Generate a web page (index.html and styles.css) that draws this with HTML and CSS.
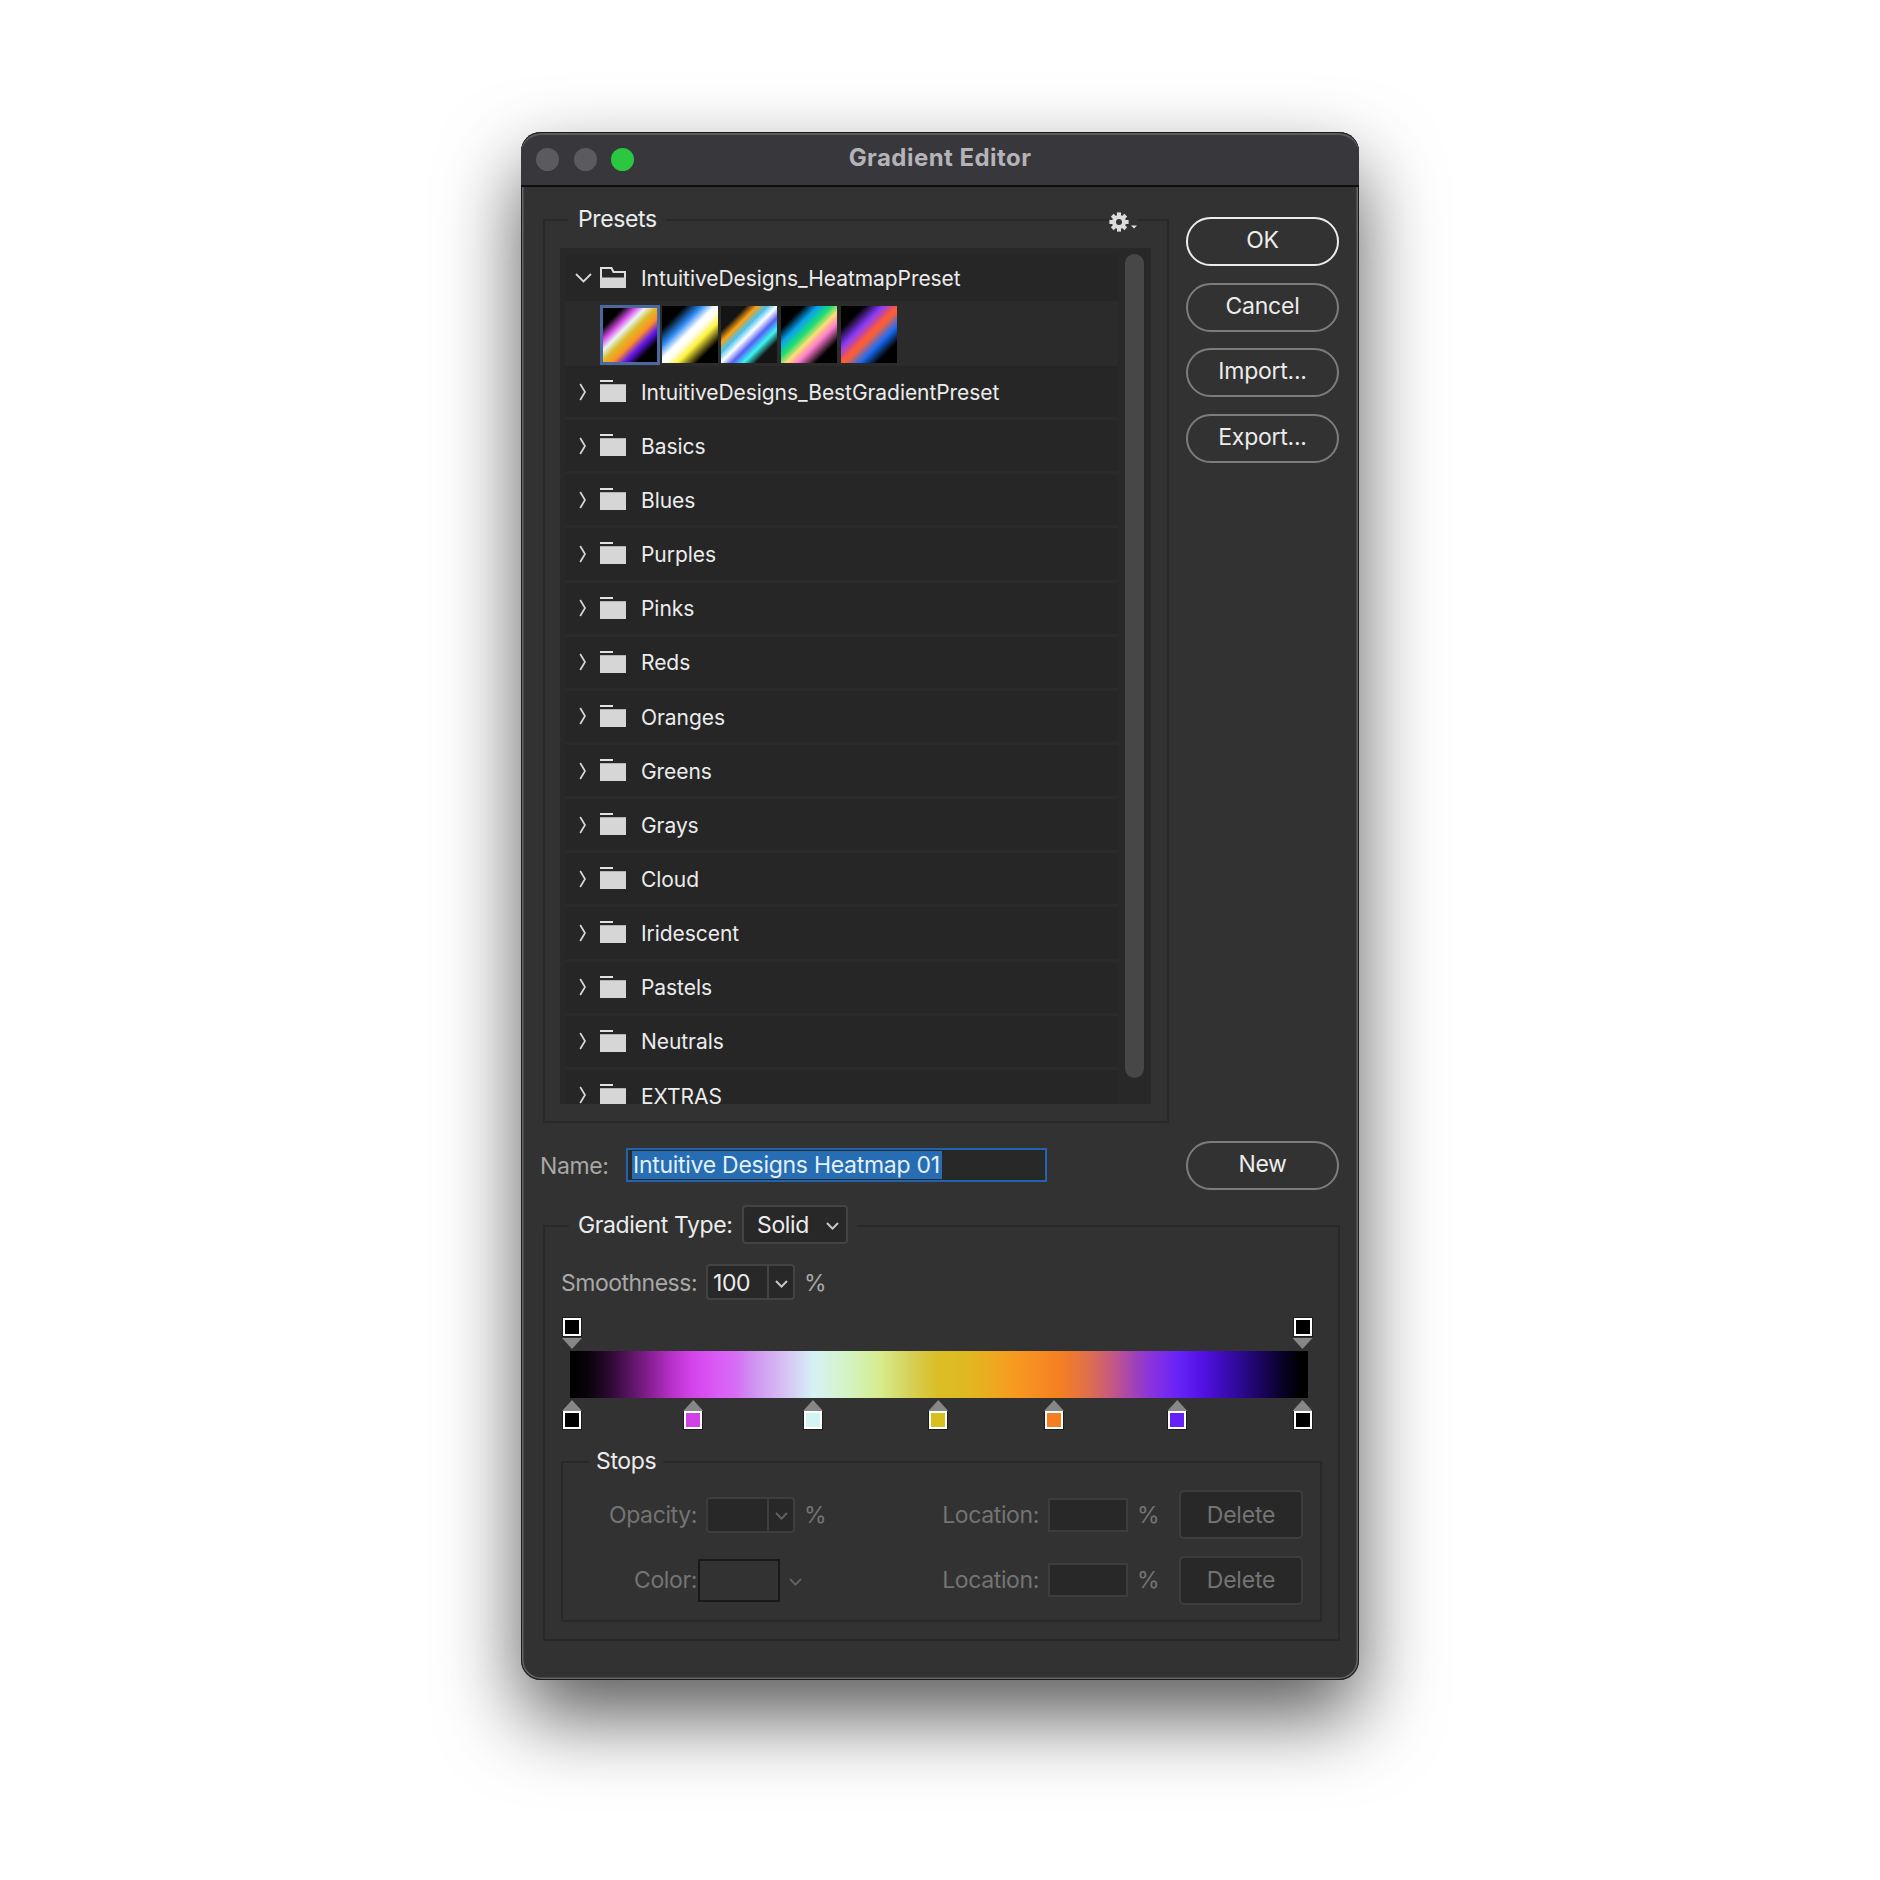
FILE: index.html
```html
<!DOCTYPE html>
<html lang="en">
<head>
<meta charset="utf-8">
<title>Gradient Editor</title>
<link rel="stylesheet" href="styles.css">
</head>
<body>
<svg width="0" height="0" class="defs">
  <symbol id="folder" viewBox="0 0 26 22"><path d="M0 4.2h26V22H0z" fill="#d6d6d6"/><path d="M0 0h13v2H0z" fill="#e2e2e2"/></symbol>
  <symbol id="folder-open" viewBox="0 0 26 21"><path d="M1 11V1h10.5l2 4H25v6" fill="none" stroke="#dedede" stroke-width="2"/><path d="M0 10.5h26V21H0z" fill="#d6d6d6"/></symbol>
  <symbol id="right" viewBox="0 0 8 18"><path d="M1.2 1l4.8 8-4.8 8" fill="none" stroke="#d8d8d8" stroke-width="1.7"/></symbol>
  <symbol id="down" viewBox="0 0 13 8"><path d="M1 1l5.5 5.6L12 1" fill="none" stroke="currentColor" stroke-width="2"/></symbol>
  <symbol id="open" viewBox="0 0 17 10"><path d="M1 1l7.5 7.4L16 1" fill="none" stroke="#d8d8d8" stroke-width="1.8"/></symbol>
</svg>
<main class="window">
  <header class="titlebar">
    <div class="lights"><i></i><i></i><i class="on"></i></div>
    <h1>Gradient Editor</h1>
  </header>
  <div class="content">
    <div class="top">
      <fieldset class="presets">
        <legend><span>Presets</span></legend>
        <div class="menu">
          <svg class="gear" width="20" height="20" viewBox="-10 -10 20 20"><g fill="#dcdcdc"><path id="tooth" d="M-2-9.6h4v19.2h-4z"/><use href="#tooth" transform="rotate(45)"/><use href="#tooth" transform="rotate(90)"/><use href="#tooth" transform="rotate(135)"/><circle r="7"/></g><circle r="3" fill="#323232"/></svg>
          <svg width="6" height="4" viewBox="0 0 6 4"><path d="M0 .5h6L3 3.5z" fill="#e4e4e4"/></svg>
        </div>
        <div class="list">
          <div class="rows">
            <div class="row first"><svg class="chev-d"><use href="#open"/></svg><svg class="fold open"><use href="#folder-open"/></svg><span>IntuitiveDesigns_HeatmapPreset</span></div>
            <div class="swatches"><i class="sw s1"></i><i class="sw s2"></i><i class="sw s3"></i><i class="sw s4"></i><i class="sw s5"></i></div>
            <div class="row"><svg class="chev"><use href="#right"/></svg><svg class="fold"><use href="#folder"/></svg><span>IntuitiveDesigns_BestGradientPreset</span></div>
            <div class="row"><svg class="chev"><use href="#right"/></svg><svg class="fold"><use href="#folder"/></svg><span>Basics</span></div>
            <div class="row"><svg class="chev"><use href="#right"/></svg><svg class="fold"><use href="#folder"/></svg><span>Blues</span></div>
            <div class="row"><svg class="chev"><use href="#right"/></svg><svg class="fold"><use href="#folder"/></svg><span>Purples</span></div>
            <div class="row"><svg class="chev"><use href="#right"/></svg><svg class="fold"><use href="#folder"/></svg><span>Pinks</span></div>
            <div class="row"><svg class="chev"><use href="#right"/></svg><svg class="fold"><use href="#folder"/></svg><span>Reds</span></div>
            <div class="row"><svg class="chev"><use href="#right"/></svg><svg class="fold"><use href="#folder"/></svg><span>Oranges</span></div>
            <div class="row"><svg class="chev"><use href="#right"/></svg><svg class="fold"><use href="#folder"/></svg><span>Greens</span></div>
            <div class="row"><svg class="chev"><use href="#right"/></svg><svg class="fold"><use href="#folder"/></svg><span>Grays</span></div>
            <div class="row"><svg class="chev"><use href="#right"/></svg><svg class="fold"><use href="#folder"/></svg><span>Cloud</span></div>
            <div class="row"><svg class="chev"><use href="#right"/></svg><svg class="fold"><use href="#folder"/></svg><span>Iridescent</span></div>
            <div class="row"><svg class="chev"><use href="#right"/></svg><svg class="fold"><use href="#folder"/></svg><span>Pastels</span></div>
            <div class="row"><svg class="chev"><use href="#right"/></svg><svg class="fold"><use href="#folder"/></svg><span>Neutrals</span></div>
            <div class="row"><svg class="chev"><use href="#right"/></svg><svg class="fold"><use href="#folder"/></svg><span>EXTRAS</span></div>
          </div>
          <div class="scroll"></div>
        </div>
      </fieldset>
      <div class="actions">
        <button class="pill primary">OK</button>
        <button class="pill">Cancel</button>
        <button class="pill">Import...</button>
        <button class="pill">Export...</button>
      </div>
    </div>
    <div class="name">
      <label>Name:</label>
      <div class="field"><span class="sel">Intuitive Designs Heatmap 01</span></div>
      <button class="pill new">New</button>
    </div>
    <fieldset class="gradient">
      <legend><span class="type">Gradient Type:</span><div class="select"><span>Solid</span><svg class="dn"><use href="#down"/></svg></div></legend>
      <div class="smooth">
        <label>Smoothness:</label>
        <div class="combo"><b>100</b><i><svg class="dn"><use href="#down"/></svg></i></div>
        <span>%</span>
      </div>
      <div class="editor">
        <div class="bar"></div>
        <div class="stop up" style="left:11px"></div>
        <div class="stop up" style="left:741.5px"></div>
        <div class="stop" style="left:11px"></div>
        <div class="stop" style="left:132.3px;--c:#cf43e4"></div>
        <div class="stop" style="left:252px;--c:#d3f4f2"></div>
        <div class="stop" style="left:377.3px;--c:#d8bf20"></div>
        <div class="stop" style="left:493px;--c:#f57f20"></div>
        <div class="stop" style="left:616.3px;--c:#6420f6"></div>
        <div class="stop" style="left:741.5px"></div>
      </div>
      <fieldset class="stops">
        <legend><span>Stops</span></legend>
        <div class="line">
          <label>Opacity:</label>
          <div class="combo"><b></b><i><svg class="dn"><use href="#down"/></svg></i></div>
          <span class="pct">%</span>
          <label class="loc">Location:</label>
          <div class="box"></div>
          <span class="pct2">%</span>
          <button class="del">Delete</button>
        </div>
        <div class="line">
          <label>Color:</label>
          <div class="well"></div><svg class="dn wd"><use href="#down"/></svg>
          <label class="loc">Location:</label>
          <div class="box"></div>
          <span class="pct2">%</span>
          <button class="del">Delete</button>
        </div>
      </fieldset>
    </fieldset>
  </div>
</main>
</body>
</html>
```
FILE: styles.css
```css
*, *::before, *::after { box-sizing: border-box; }
body {
  margin: 0;
  height: 1880px;
  padding: 132px 0 0 521px;
  background: #fff;
  font-family: Inter, "Liberation Sans", sans-serif;
  font-size: 23px;
  line-height: 28px;
  letter-spacing: -.38px;
  color: #ececec;
}
.defs { position: absolute; }
svg { display: block; flex: none; }
i, b { font-style: normal; font-weight: 400; }
fieldset { margin: 0; min-width: 0; border: 2px solid #292929; }
button { font: inherit; letter-spacing: inherit; color: inherit; padding: 0; margin: 0; }

.window {
  width: 838px;
  height: 1548px;
  border-radius: 20px;
  background: #323232;
  box-shadow: inset 0 0 0 1px #1c1c1c, inset 0 0 0 2.5px #646466, 0 36px 80px rgba(0, 0, 0, .65);
}
.titlebar {
  height: 55px;
  display: grid;
  grid-template-columns: 170px 1fr 170px;
  align-items: center;
  background: #38373b;
  border-bottom: 2px solid #0e0e0e;
  border-radius: 20px 20px 0 0;
  box-shadow: inset 0 1px #1c1c1c, inset 0 3px #5c5c5e;
}
.lights { display: flex; gap: 14.5px; padding: 1px 0 0 15px; }
.lights i { width: 23px; height: 23px; border-radius: 50%; background: #5b5a5e; }
.lights .on { background: #29c840; }
h1 { margin: -2px 0 0; font-size: 24px; letter-spacing: .45px; font-weight: 700; text-align: center; color: #b4b3b8; }

.content { padding: 18px 20px 0 22px; }
.top { display: flex; justify-content: space-between; }
.presets { width: 626px; height: 918px; padding: 13px 16px 0 15px; position: relative; }
legend { display: flex; align-items: center; height: 30px; padding: 0 9px; margin-left: 8px; }
.presets > legend { padding-bottom: 2px; padding-left: 10px; }
.menu {
  position: absolute;
  right: 30px; top: -23px;
  display: flex; align-items: center; gap: 2px;
  background: #323232;
}
.menu svg + svg { margin-top: 10px; }

.list {
  height: 856px;
  display: flex;
  justify-content: space-between;
  background: #282828;
  padding: 6px 7px 0 5px;
  overflow: hidden;
}
.rows { width: 553px; height: 850px; overflow: hidden; }
.row {
  height: 54.15px;
  display: flex;
  align-items: center;
  background: #262626;
  border-bottom: 3px solid #2a2a2a;
  font-size: 21px;
  letter-spacing: -.06px;
}
.row span { margin: 2.4px 0 0 15px; }
.row .chev { width: 8px; height: 18px; margin: 0 13px 0 14px; }
.fold { width: 26px; height: 22px; margin-top: -1px; }
.fold.open { height: 21px; }
.row.first { height: 47px; border: 0; }
.row .chev-d { width: 17px; height: 10px; margin: 0 8px 0 10px; }
.swatches { height: 65px; display: flex; gap: 3.8px; padding: 4px 0 0 35px; background: #2b2b2b; }
.sw { width: 56px; height: 57px; margin-top: 1px; }
.s1 { width: 60px; height: 60px; margin: 0 -2.2px 0 0; border: 3px solid #4c689f; background: linear-gradient(135deg, #000 18%, #d850e8 30%, #e8f4f2 39%, #dcbc2c 49%, #ff9022 59%, #6318ee 70%, #000 82%) padding-box; }
.s2 { background: linear-gradient(135deg, #000 20%, #2a88f2 35%, #fff 47%, #fff 53%, #fff23c 64%, #000 81%); }
.s3 { background: linear-gradient(135deg, #141414 22%, #ff9f10 32%, #48c0ee 41%, #fff 50%, #5560f5 60%, #3af6f0 70%, #141414 81%); }
.s4 { background: linear-gradient(135deg, #000 20%, #08a2f2 33%, #1ce06c 45%, #ffde72 55%, #ff7ccf 65%, #000 81%); }
.s5 { background: linear-gradient(135deg, #000 20%, #8a3aff 37%, #ff5a34 50%, #f4603f 54%, #1a6cf6 67%, #000 82%); }
.scroll { width: 19px; height: 824px; border-radius: 10px; background: #474747; }

.actions { display: flex; flex-direction: column; gap: 16.5px; padding-top: 12px; }
.pill {
  width: 153px; height: 49px;
  padding-bottom: 3px;
  border: 2px solid #7c7c7c;
  border-radius: 25px;
  background: none;
}
.primary { border-color: #ececec; }
.actions .pill { letter-spacing: -.25px; }

.name { height: 50px; margin: 17px 0 15px -3px; display: flex; align-items: center; }
.name label { width: 86px; padding-top: 2px; color: #a8a8a8; }
.field { width: 421px; height: 34px; padding: 1px 4px; border: 2px solid #2263b0; background: #282828; }
.sel { display: inline-block; height: 28px; padding: 0 2px 0 1px; background: #266db3; color: #e4f0fa; letter-spacing: -.28px; }
.new { margin-left: auto; }

.gradient { width: 797px; height: 436px; padding: 17px 16px 0; }
.gradient > legend { height: 42px; align-items: flex-start; line-height: 40px; }
.type { width: 154px; white-space: nowrap; }
.select {
  width: 106px; height: 39px; margin-left: 10px; padding: 0 7px 0 13px;
  display: flex; align-items: center; justify-content: space-between;
  border: 2px solid #434343; border-radius: 4px; background: #282828;
}
.dn { width: 13px; height: 8px; margin-top: 3px; color: #c8c8c8; }
.smooth { display: flex; align-items: center; height: 36px; color: #a8a8a8; line-height: 30px; }
.smooth label { width: 145px; padding-top: 2px; letter-spacing: -.5px; }
.smooth > span { padding-top: 2px; }
.combo { width: 89px; height: 36px; display: flex; border: 2px solid #434343; border-radius: 4px; background: #282828; color: #ececec; }
.combo b { width: 59px; padding-left: 5px; line-height: 34px; }
.combo i { flex: 1; border-left: 2px solid #434343; display: grid; place-items: center; }
.combo + span { margin-left: 9px; }

.editor { position: relative; height: 129px; padding: 51px 0 0 9px; }
.bar {
  width: 738px; height: 47px;
  background: linear-gradient(90deg, #000 0, #0a020c 2.4%, #2f0a35 5.6%, #8a2096 11%, #b630c8 13.7%, #d343ea 16.5%, #da5cf6 20%, #d66cf5 22.4%, #cf90f0 24.6%, #d6b8f3 28.3%, #d5f2f5 33%, #d3f3c0 38%, #d6ec8c 42%, #d6d15a 46%, #dabf28 49.5%, #e0b820 54%, #f79b20 60%, #f57f22 66.4%, #e07048 70%, #c85a80 73.2%, #a545b0 76%, #8a34dc 78.6%, #6622f8 82.6%, #4f10e0 86%, #2c0890 91%, #0a0230 96%, #000 99%);
}
.stop { position: absolute; top: 100px; width: 20px; margin-left: -10px; }
.stop::before { content: ""; display: block; height: 11px; background: #878787; clip-path: polygon(50% 0, 100% 100%, 0 100%); }
.stop::after { content: ""; display: block; width: 18px; height: 18px; margin-left: 1px; border: 2px solid #fff; background: var(--c, #000); box-shadow: 0 0 0 1px #1c1c1c; }
.stop.up { top: 18px; display: flex; flex-direction: column-reverse; }
.stop.up::before { clip-path: polygon(0 0, 100% 0, 50% 100%); margin-top: 2px; }

.stops { width: 761px; height: 175px; margin-top: 18px; padding: 13px 17px 0 0; color: #747474; }
.stops legend { padding: 0 7px 3px; margin-left: 26px; color: #ececec; }
.line { height: 49px; margin-bottom: 16.5px; display: flex; align-items: center; }
.line label { width: 134px; text-align: right; }
.line .combo { margin-left: 9px; border-color: #3d3d3d; }
.line .combo i { border-color: #3d3d3d; }
.line .dn { color: #606060; }
.well { width: 82px; height: 43px; margin-left: 1px; border: 2px solid #191919; }
.line .wd { margin-left: 9px; }
.line .loc { width: auto; margin-left: auto; }
.box { width: 80px; height: 34px; margin-left: 9px; border: 2px solid #3d3d3d; background: #282828; }
.pct2 { margin-left: 9px; width: 42px; }
.del { width: 124px; height: 49px; border: 2px solid #3d3d3d; border-radius: 5px; background: #282828; letter-spacing: -.2px; }
```
